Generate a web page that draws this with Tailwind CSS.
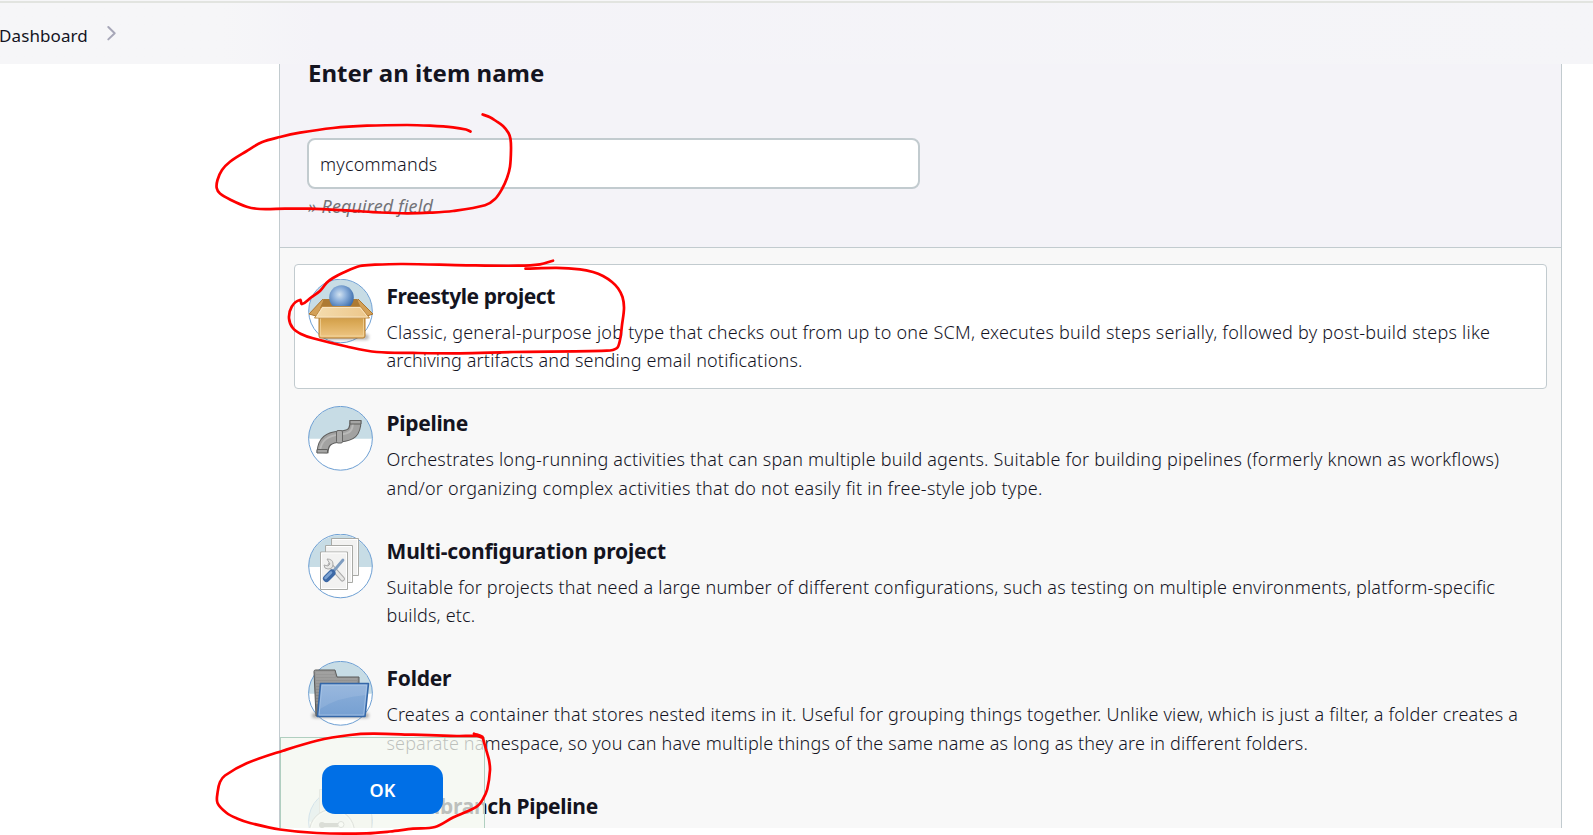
<!DOCTYPE html>
<html lang="en">
<head>
<meta charset="utf-8">
<title>New Item</title>
<script src="https://cdn.jsdelivr.net/npm/@tailwindcss/browser@4"></script>
</head>
<body class="relative h-[835px] w-[1593px] overflow-hidden bg-white font-['Noto_Sans',sans-serif] text-[18px] text-[#14141f]">
<header class="flex h-16 flex-col overflow-hidden bg-[#f6f6f8]">
  <div class="mt-px h-0.5 shrink-0 bg-[#e2e4e0]"></div>
  <div class="h-[61px] shrink-0 bg-linear-to-r from-[#f6f6f8] from-14% via-[#f4f3f8] via-20% to-[#f5f5f8]">
    <nav class="-ml-px flex items-start pt-[19px]">
      <span class="w-[89px] pt-0.5 text-[17px] leading-6 tracking-[0.1px] whitespace-nowrap">Dashboard</span>
      <svg class="mt-[3px] ml-[18px]" width="12" height="16" viewBox="0 0 12 16" fill="none" stroke="#a7a7b8" stroke-width="2" stroke-linecap="round" stroke-linejoin="round"><path d="M2.3 2 8.7 8.2 2.3 14.4"/></svg>
    </nav>
  </div>
</header>
<main class="ml-[279px] flex h-[764px] w-[1283px] flex-col overflow-hidden border-x border-[#c2cbcf] bg-[#f8f8f8]">
  <section class="h-[184px] shrink-0 border-b border-[#c2cbcf] bg-[#f4f3f8] pl-7">
    <h1 class="pt-px text-[24px] leading-4 font-bold">Enter an item name</h1>
    <div class="mt-[57px] -ml-px flex h-[51px] w-[613px] items-center rounded-lg border-2 border-[#c2cbcf] bg-white pt-0.5 pl-[11px] font-[340] tracking-[0.2px]">mycommands</div>
    <p class="mt-[5px] leading-6 tracking-[0.1px] text-[#737378] italic">» Required field</p>
  </section>
  <ul class="flex flex-col gap-[2.4px] px-3.5 pt-4">
    <li class="flex h-[125px] shrink-0 gap-[13.5px] rounded border border-[#c2cbcf] bg-white pt-3.5 pl-[13px]">
      <svg class="shrink-0" width="65" height="65" viewBox="0 0 65 65">
        <defs>
          <radialGradient id="ball" cx=".42" cy=".38" r=".65"><stop offset="0" stop-color="#d3e3f0"/><stop offset=".4" stop-color="#8fb2dc"/><stop offset="1" stop-color="#3467a8"/></radialGradient>
          <linearGradient id="box" x1="0" y1="0" x2="0" y2="1"><stop offset="0" stop-color="#c8923d"/><stop offset=".4" stop-color="#daa956"/><stop offset="1" stop-color="#efc786"/></linearGradient>
          <linearGradient id="flap" x1="0" y1="0" x2="1" y2="0"><stop offset="0" stop-color="#f4dcae"/><stop offset="1" stop-color="#ecc68a"/></linearGradient>
          <filter id="soft" x="-20%" y="-50%" width="140%" height="200%"><feGaussianBlur stdDeviation="1.8"/></filter>
          <clipPath id="disc"><circle cx="32.5" cy="32" r="31.5"/></clipPath>
        </defs>
        <circle cx="32.5" cy="32" r="31.8" fill="#fff"/><path clip-path="url(#disc)" fill="#c7dce5" d="M0 0h65v33H0z"/><circle cx="32.5" cy="32" r="31.8" fill="none" stroke="#6d9fd3"/>
        <rect x="13" y="55" width="48" height="6" rx="3" fill="#555" opacity=".4" filter="url(#soft)"/>
        <path d="M15 20 1 35l7 2L19 28zM50 20l15 15-6 2L48 28z" fill="#d3a057" stroke="#ac7630"/>
        <path d="M16 20h33l4 9H12z" fill="#ad7a33"/>
        <circle cx="33.5" cy="18.5" r="12.300" fill="url(#ball)"/>
        <path d="M11 34h46v23q0 2-2 2H13q-2 0-2-2z" fill="url(#box)" stroke="#b37b2c"/>
        <path d="M12.5 39h43v18h-43z" fill="none" stroke="#f3d8a4" opacity=".7"/>
        <path d="M14 27.5h38.5L61.500 39H6.500z" fill="url(#flap)" stroke="#bd8b45"/>
        <path d="M14.500 28.500h37.500L59.500 38H8.500z" fill="none" stroke="#fbe9c8" opacity=".8"/>
      </svg>
      <div class="mt-[3px]">
        <h2 class="text-[21px] leading-7 font-bold tracking-[-0.42px]">Freestyle project</h2>
        <div class="mt-2 flex flex-col font-[340] whitespace-nowrap leading-[28.2px]"><span class="tracking-[0.245px]">Classic, general-purpose job type that checks out from up to one SCM, executes build steps serially, followed by post-build steps like</span><span class="tracking-[0.16px]">archiving artifacts and sending email notifications.</span></div>
      </div>
    </li>
    <li class="flex h-[125px] shrink-0 gap-[13.5px] pt-[15px] pl-3.5">
      <svg class="shrink-0" width="65" height="65" viewBox="0 0 65 65">
        <circle cx="32.5" cy="32.3" r="32" fill="#fff"/><path d="M.5 32.8a32 32 0 0 1 64 0z" fill="#c7dce5"/><circle cx="32.5" cy="32.3" r="31.9" fill="none" stroke="#6d9fd3"/>
        <path d="M14.500 47C15 35 21 31.500 32 30.500 43 29.500 47.500 27 47.500 14" fill="none" stroke="#60605f" stroke-width="12"/>
        <path d="M14.500 46C15 35 21 31.500 32 30.500 43 29.500 47.500 27 47.500 15" fill="none" stroke="#a2a2a1" stroke-width="9.800"/>
        <path d="M12 45.500C13 34 20 29.500 32 28.500 42 27.500 45 25 45 15.500" fill="none" stroke="#b9b9b8" stroke-width="2"/>
        <path d="M42 14.500h11v3.500H42z" fill="#a5a5a4" stroke="#60605f"/><path d="M9 43.500h10.500V47H9z" fill="#a5a5a4" stroke="#60605f"/>
        <rect x="28.500" y="24.500" width="6" height="12.500" rx="1.500" fill="#aaaaa9" stroke="#666665"/>
      </svg>
      <div class="mt-[3px]">
        <h2 class="text-[21px] leading-7 font-bold tracking-[-0.3px]">Pipeline</h2>
        <div class="mt-2 flex flex-col font-[340] whitespace-nowrap leading-[28.2px]"><span class="tracking-[0.198px]">Orchestrates long-running activities that can span multiple build agents. Suitable for building pipelines (formerly known as workflows)</span><span class="tracking-[0.26px]">and/or organizing complex activities that do not easily fit in free-style job type.</span></div>
      </div>
    </li>
    <li class="flex h-[125px] shrink-0 gap-[13.5px] pt-[15px] pl-3.5">
      <svg class="shrink-0" width="65" height="65" viewBox="0 0 65 65">
        <circle cx="32.500" cy="32" r="32" fill="#fff"/><path d="M.5 33a32 32 0 0 1 64 0z" fill="#c7dce5"/><circle cx="32.500" cy="32" r="31.800" fill="none" stroke="#6d9fd3"/>
        <g fill="#f2f2f1" stroke="#a9aaa6"><path d="M23.500 4.500h27v37h-27z"/><path d="M17.500 11.500h27v37h-27z"/><path d="M12.500 18h27v37.500h-27z"/></g>
        <g fill="none" stroke="#fff"><path d="M24.500 5.500h25v35M18.500 12.500h25v35M13.500 19h25v35.500h-25z"/></g>
        <path d="m22 31 12.500 14" stroke="#aaa" stroke-width="5" stroke-linecap="round"/>
        <path d="m22 31 12.500 14" stroke="#e8e8e6" stroke-width="3" stroke-linecap="round"/>
        <path d="M19 25q6 0 6 5t-5 5q-4 0-4-4l4 1 2-2z" fill="#e8e8e6" stroke="#aaa"/>
        <path d="m24 39 11-13" stroke="#7f9dc0" stroke-width="2.800" stroke-linecap="round"/>
        <path d="m18.500 44.500 5.500-5.500" stroke="#3d69a6" stroke-width="7" stroke-linecap="round"/>
        <path d="m17.500 44 5.500-5.500" stroke="#7ba2d2" stroke-width="2.500" stroke-linecap="round"/>
      </svg>
      <div class="mt-[3px]">
        <h2 class="text-[21px] leading-7 font-bold tracking-[-0.17px]">Multi-configuration project</h2>
        <div class="mt-2 flex flex-col font-[340] whitespace-nowrap leading-[28.2px]"><span class="tracking-[0.175px]">Suitable for projects that need a large number of different configurations, such as testing on multiple environments, platform-specific</span><span class="tracking-[0.16px]">builds, etc.</span></div>
      </div>
    </li>
    <li class="flex h-[125px] shrink-0 gap-[13.5px] pt-[15px] pl-3.5">
      <svg class="shrink-0" width="65" height="65" viewBox="0 0 65 65">
        <defs>
          <linearGradient id="blue" x1="0" y1="0" x2="0" y2="1"><stop offset="0" stop-color="#8db0da"/><stop offset="1" stop-color="#76a0d2"/></linearGradient>
          <linearGradient id="gray" x1="0" y1="0" x2="0" y2="1"><stop offset="0" stop-color="#9c9c9b"/><stop offset="1" stop-color="#737372"/></linearGradient>
        </defs>
        <circle cx="32.500" cy="32.300" r="32" fill="#fff"/><path d="M.5 32.800a32 32 0 0 1 64 0z" fill="#c7dce5"/><circle cx="32.500" cy="32.300" r="31.900" fill="none" stroke="#6d9fd3"/>
        <rect x="4" y="52" width="57" height="5" rx="2" fill="#555" opacity=".45" filter="url(#soft)"/>
        <path d="M6 10.500Q6 9 7.500 9H27l2 7h22v20L10 55H8z" fill="url(#gray)" stroke="#5a5a59" stroke-linejoin="round"/>
        <path d="M8 12h18M8 15h19M8 18h41M8 21h41M8 24h4M8 27h4M8 30h4M8 33h3M8 36h3M8 39h3M8 42h2" stroke="#b4b4b3" opacity=".6"/>
        <path d="M12.500 22.500H60.500L57 55.500H9.500z" fill="url(#blue)" stroke="#3467a8" stroke-width="1.600" stroke-linejoin="round"/>
        <path d="M14 24h45l-1 10Q30 36 12 48z" fill="#fff" opacity=".1"/><path d="M14 24.200h44.700L55.700 54H11z" fill="none" stroke="#b4cdeb" opacity=".6"/>
      </svg>
      <div class="mt-[3px]">
        <h2 class="text-[21px] leading-7 font-bold tracking-[-0.25px]">Folder</h2>
        <div class="mt-2 flex flex-col font-[340] whitespace-nowrap leading-[28.4px]"><span class="tracking-[0.197px]">Creates a container that stores nested items in it. Useful for grouping things together. Unlike view, which is just a filter, a folder creates a</span><span class="tracking-[0.155px]">separate namespace, so you can have multiple things of the same name as long as they are in different folders.</span></div>
      </div>
    </li>
    <li class="flex h-[125px] shrink-0 gap-[13.5px] pt-[15px] pl-3.5">
      <svg class="shrink-0" width="65" height="65" viewBox="0 0 65 65">
        <circle cx="32.500" cy="32.300" r="32" fill="#fff"/><path d="M.5 32.800a32 32 0 0 1 64 0z" fill="#c7dce5"/><circle cx="32.500" cy="32.300" r="31.900" fill="none" stroke="#6d9fd3"/>
        <path d="M11.500.5h52v40h-52z" fill="#eeeeec" stroke="#bbb"/>
        <circle cx="24" cy="43" r="22.500" fill="#f0f0ef" stroke="#999"/><circle cx="24" cy="43" r="21" fill="none" stroke="#fff"/>
        <path d="M14 36h16" stroke="#8a8a88" stroke-width="4"/><circle cx="14" cy="36" r="3" fill="#8a8a88"/><circle cx="33" cy="35.500" r="3" fill="#fff" stroke="#999"/>
      </svg>
      <div class="mt-[3px]"><h2 class="text-[21px] leading-7 font-bold tracking-[-0.3px]">Multibranch Pipeline</h2></div>
    </li>
  </ul>
</main>
<div class="absolute top-[737px] left-[280px] flex h-[91px] w-[205px] border border-b-0 border-[#b0cfc0] bg-[#f5f9f1]/75 pt-[27px] pl-[41px]">
  <button class="h-[49px] w-[121px] rounded-[13px] bg-[#006fe6] pt-0.5 text-[18px] font-semibold text-white">OK</button>
</div>
<!-- Hand-drawn red pen marks -->
<svg id="pen" class="pointer-events-none absolute inset-0" width="1593" height="835" fill="none" stroke="#fe0000" stroke-width="2.7" stroke-linecap="round" stroke-linejoin="round"></svg>
<script>
const strokes=[
[[470.500,131.500],[466,129.500],[453,127.300],[430,125.700],[407,125],[367,125.700],[333,128],[300,132.700],[280,137],[261.700,142.300],[246,151.500],[230,161.700],[222,170],[217.500,180],[216.700,188],[220,193.500],[231,200],[246.700,206.700],[260,209],[285,208.700],[310,208.700],[350,210.700],[380,212.500],[406.700,213.300],[430,212.700],[453,211],[485,205.300],[495,199],[502,189],[507,178],[510,166.700],[511,150],[510.500,139],[508.500,133],[503,126],[496,121],[490,117.300],[482.700,114.500]],
[[553,260.700],[540,264.300],[518,265.700],[466.700,265.300],[403,264],[375,264.700],[360,266],[343,272.700],[333,278],[326.700,282.700],[320,291],[311,297.500],[302,304],[300,300],[291.700,306.700],[289,318.300],[293,328.300],[301,334],[313,338.300],[346.700,346.500],[376.700,352],[413,352.900],[460,353.300],[513,352],[606.700,350.700],[616.700,348.300],[620,340],[622,325],[624,308.300],[622.500,297],[618,288.300],[612,282],[603,276],[593,272],[580,269.300],[556.700,267.900],[525.500,268.700]],
[[474,733.700],[482.500,737],[476.700,736],[456.700,736],[413,734.700],[373,733.700],[350,735],[316.700,740.700],[283,750.700],[246.700,763.300],[225,775.500],[220,782],[217.700,791.700],[217.500,803],[226.700,813],[237,818.500],[250,823],[280,829.500],[316.700,833],[366.700,833.300],[390,831.500],[413,828.700],[435,827],[453,817.500],[476.700,806.700],[483,799],[487.300,789],[490,770],[489,760],[486.700,751.700],[482.500,737]]];
for(const p of strokes){
  let d=`M${p[0]}`;
  for(let i=0;i<p.length-1;i++){
    const a=p[Math.max(i-1,0)],b=p[i],c=p[i+1],e=p[Math.min(i+2,p.length-1)];
    const L=Math.hypot(c[0]-b[0],c[1]-b[1]);
    const t=(u,v)=>{const l=Math.hypot(v[0]-u[0],v[1]-u[1])||1;return[(v[0]-u[0])/l*L/3,(v[1]-u[1])/l*L/3]};
    const m=t(a,c),n=t(b,e);
    d+=`C${b[0]+m[0]} ${b[1]+m[1]} ${c[0]-n[0]} ${c[1]-n[1]} ${c}`;
  }
  const el=document.createElementNS('http://www.w3.org/2000/svg','path');
  el.setAttribute('d',d);
  document.getElementById('pen').append(el);
}
</script>
</body>
</html>
